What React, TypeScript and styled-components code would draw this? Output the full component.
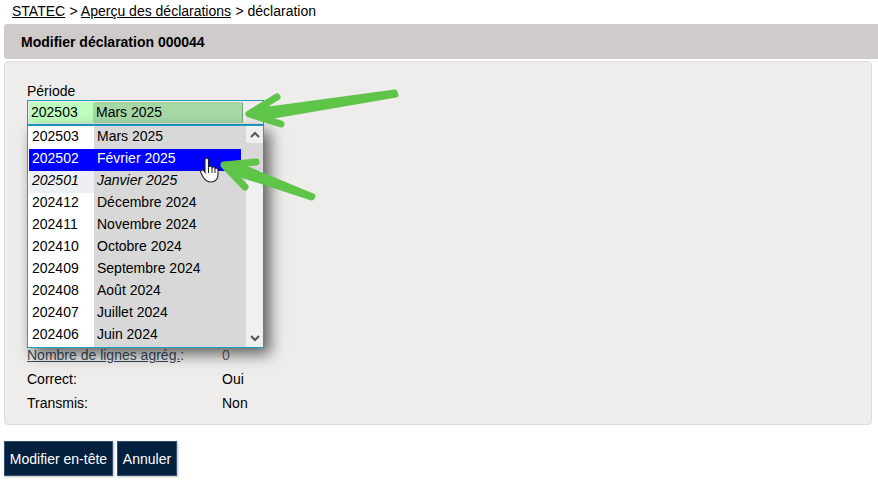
import React from 'react';
import styled, { createGlobalStyle } from 'styled-components';

const GlobalStyle = createGlobalStyle`
  html, body {
    margin: 0;
    padding: 0;
    background: #fff;
    color: #000;
    font-family: 'Liberation Sans', Arial, sans-serif;
    font-size: 14px;
  }
`;

const Page = styled.div`
  position: relative;
  width: 878px;
  height: 481px;
  overflow: hidden;
  padding: 0 6px 0 4px;
  box-sizing: border-box;
`;
const Breadcrumb = styled.div`
  height: 24px;
  padding: 3px 0 0 8px;
  box-sizing: border-box;
  line-height: 16px;
  a {
    color: #000;
    text-decoration: underline;
    margin-right: 0.5px;
  }
`;
const TitleBar = styled.h1`
  margin: 0 -6px 2px 0;
  height: 35px;
  padding-left: 17px;
  display: flex;
  align-items: center;
  background: #cfcbca;
  border-radius: 3px 0 0 3px;
  font-size: 14px;
  font-weight: bold;
`;
const Panel = styled.section`
  height: 364px;
  box-sizing: border-box;
  padding: 21px 22px 0;
  background: #eeedec;
  border: 1px solid #dedddc;
  border-radius: 4px;
`;
const FieldLabel = styled.div`
  height: 17px;
  line-height: 16px;
`;
const SelectArea = styled.div`
  position: relative;
  width: 237px;
  height: 25px;
  margin-bottom: 218px;
`;
const SelectBox = styled.div`
  height: 25px;
  box-sizing: border-box;
  border: 1px solid #1f9bc4;
  padding: 1px 20px 1px 1px;
  display: flex;
`;
const SelectCode = styled.div`
  width: 64px;
  padding-left: 2px;
  box-sizing: border-box;
  background: #bdfdbd;
  line-height: 21px;
`;
const SelectName = styled.div`
  flex: 1;
  padding-left: 3px;
  background: #a6d8a6;
  border-right: 1px solid #6fa37a;
  border-radius: 2px;
  line-height: 21px;
`;
const Dropdown = styled.div`
  position: absolute;
  top: 25px;
  left: 0;
  width: 237px;
  height: 223px;
  box-sizing: border-box;
  border: 1px solid #1f9bc4;
  background: #fff;
  box-shadow: 6px 6px 14px rgba(0, 0, 0, 0.6);
  display: flex;
`;
const OptionList = styled.div`
  width: 218px;
  box-sizing: border-box;
  padding: 1px 0 0 1px;
  background: linear-gradient(to right, #fff 66px, #d8d8d8 66px);
`;
const Option = styled.div<{ $selected?: boolean; $italic?: boolean }>`
  height: 22px;
  display: flex;
  line-height: 19px;
  width: ${(p) => (p.$selected ? '212px' : 'auto')};
  background: ${(p) => (p.$selected ? '#0000ff' : 'transparent')};
  color: ${(p) => (p.$selected ? '#fff' : '#000')};
  font-style: ${(p) => (p.$italic ? 'italic' : 'normal')};
`;
const OptionCode = styled.div<{ $italic?: boolean }>`
  width: 65px;
  padding-left: 3px;
  box-sizing: border-box;
  background: ${(p) => (p.$italic ? '#eeeff5' : 'transparent')};
`;
const OptionName = styled.div`
  padding-left: 3px;
`;
const Scrollbar = styled.div`
  width: 17px;
  background: #f0f0f0;
  display: flex;
  flex-direction: column;
  justify-content: space-between;
`;
const ScrollButton = styled.div`
  height: 17px;
  display: flex;
  align-items: center;
  justify-content: center;
  color: #555;
`;
const ScrollThumb = styled.div`
  flex: 0 0 28px;
  margin-bottom: auto;
  background: #d8d8d8;
`;
const InfoRow = styled.div`
  display: flex;
  height: 24px;
  line-height: 24px;
`;
const InfoLabel = styled.div<{ $link?: boolean }>`
  width: 195px;
  color: ${(p) => (p.$link ? '#3c4a5c' : '#000')};
  span {
    text-decoration: underline;
  }
`;
const InfoValue = styled.div<{ $muted?: boolean }>`
  color: ${(p) => (p.$muted ? '#666' : '#000')};
`;
const Actions = styled.div`
  display: flex;
  gap: 4px;
  margin-top: 16px;
`;
const ActionButton = styled.button<{ $width: number }>`
  width: ${(p) => p.$width}px;
  height: 35px;
  padding: 0;
  border: 1px solid #33506e;
  background: #04203f;
  color: #fff;
  font: 14px 'Liberation Sans', Arial, sans-serif;
  box-shadow: 1px 1px 2px rgba(0, 0, 0, 0.25);
`;
const Overlay = styled.svg`
  position: absolute;
  top: 0;
  left: 0;
  pointer-events: none;
`;

const options = [
  ['202503', 'Mars 2025'],
  ['202502', 'Février 2025'],
  ['202501', 'Janvier 2025'],
  ['202412', 'Décembre 2024'],
  ['202411', 'Novembre 2024'],
  ['202410', 'Octobre 2024'],
  ['202409', 'Septembre 2024'],
  ['202408', 'Août 2024'],
  ['202407', 'Juillet 2024'],
  ['202406', 'Juin 2024'],
];

function Chevron(props: { up?: boolean }) {
  return (
    <svg width="10" height="7" viewBox="0 0 10 7">
      <path
        d={props.up ? 'M1 6 L5 2 L9 6' : 'M1 1 L5 5 L9 1'}
        fill="none"
        stroke="#555"
        strokeWidth="2"
      />
    </svg>
  );
}

export default function App() {
  return (
    <Page>
      <GlobalStyle />
      <Breadcrumb>
        <a href="#">STATEC</a> &gt; <a href="#">Aperçu des déclarations</a> &gt; déclaration
      </Breadcrumb>
      <TitleBar>Modifier déclaration 000044</TitleBar>
      <Panel>
        <FieldLabel>Période</FieldLabel>
        <SelectArea>
          <SelectBox>
            <SelectCode>202503</SelectCode>
            <SelectName>Mars 2025</SelectName>
          </SelectBox>
          <Dropdown>
            <OptionList>
              {options.map(([code, name], i) => (
                <Option key={code} $selected={i === 1} $italic={i === 2}>
                  <OptionCode $italic={i === 2}>{code}</OptionCode>
                  <OptionName>{name}</OptionName>
                </Option>
              ))}
            </OptionList>
            <Scrollbar>
              <ScrollButton>
                <Chevron up />
              </ScrollButton>
              <ScrollThumb />
              <ScrollButton>
                <Chevron />
              </ScrollButton>
            </Scrollbar>
          </Dropdown>
        </SelectArea>
        <InfoRow>
          <InfoLabel $link>
            <span>Nombre de lignes agrég.</span>:
          </InfoLabel>
          <InfoValue $muted>0</InfoValue>
        </InfoRow>
        <InfoRow>
          <InfoLabel>Correct:</InfoLabel>
          <InfoValue>Oui</InfoValue>
        </InfoRow>
        <InfoRow>
          <InfoLabel>Transmis:</InfoLabel>
          <InfoValue>Non</InfoValue>
        </InfoRow>
      </Panel>
      <Actions>
        <ActionButton $width={109}>Modifier en-tête</ActionButton>
        <ActionButton $width={60}>Annuler</ActionButton>
      </Actions>
      <Overlay width="878" height="481" viewBox="0 0 878 481">
        <g fill="#5ec548" stroke="#5ec548" strokeLinecap="round" strokeLinejoin="round">
          <path d="M396 95 L395 92 L262 110 L262 118 Z" strokeWidth="5" />
          <path d="M277 97 L249 114 L281 124" fill="none" strokeWidth="7" />
          <path d="M268 107 L249 114 L268 118 Z" strokeWidth="4" />
          <path d="M312 198 L313 196 L238 165 L235 173 Z" strokeWidth="5" />
          <path d="M256 162 L224 165 L245 187" fill="none" strokeWidth="7" />
          <path d="M240 165 L224 165 L236 176 Z" strokeWidth="4" />
        </g>
        <g transform="translate(200 157)">
          <path
            d="M5 3 C5 0.5 8.5 0.5 8.5 3 L8.5 10 C9.5 8.5 12 9 12 10.5 C13 9.5 15 10 15 11.5 C16 10.8 18 11.3 18 13 L18 18 C18 22 15 25 11 25 C7 25 5 23 3 20 L0.8 15.5 C0 13.5 2.5 12 4 14 L5 15.5 Z"
            fill="#fff"
            stroke="#222"
            strokeWidth="1.1"
          />
          <path d="M8.5 11 L8.5 16 M12 11 L12 16 M15 12 L15 16" stroke="#222" strokeWidth="1" fill="none" />
        </g>
      </Overlay>
    </Page>
  );
}
